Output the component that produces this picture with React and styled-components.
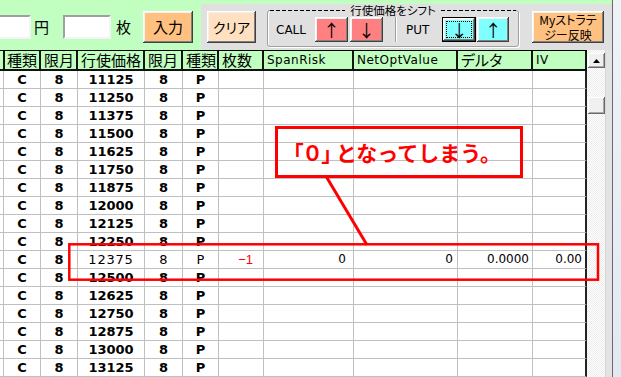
import React from "react";
import styled, { createGlobalStyle } from "styled-components";

const JP = `"Noto Sans CJK JP", sans-serif`;
const UI = `"DejaVu Sans", "Noto Sans CJK JP", sans-serif`;

const GlobalStyle = createGlobalStyle`
  html, body { margin: 0; padding: 0; overflow: hidden; }
  body { width: 621px; height: 377px; background: #fff; font-family: ${JP}; }
`;

const Window = styled.div`
  position: relative;
  display: flex;
  width: 621px;
  height: 377px;
  overflow: hidden;
`;

const Main = styled.div`
  width: 612px;
  display: flex;
  flex-direction: column;
`;

const FrameEdge = styled.div`
  width: 8px;
  border-left: 1px solid #6a6a6a;
  background: linear-gradient(#eef3f8, #e2e9f1);
`;

const TopBar = styled.div`
  height: 52px;
  box-sizing: border-box;
  padding-top: 4px;
  display: flex;
  background: #c0ffc0;
`;

const InputGroup = styled.div`
  width: 201px;
  display: flex;
  align-items: center;
  padding-bottom: 1px;
`;

const TextBox = styled.input`
  box-sizing: border-box;
  width: ${(p) => p.$w}px;
  height: 24px;
  margin: 0 0 0 ${(p) => p.$ml || 0}px;
  padding: 0;
  background: #fff;
  border: 2px solid;
  border-color: #a0a0a0 #f4f4f4 #f4f4f4 #a0a0a0;
  outline: none;
`;

const Unit = styled.span`
  font-family: ${JP};
  font-size: 15px;
  line-height: 20px;
  margin-left: ${(p) => p.$ml}px;
`;

const Btn = styled.button`
  box-sizing: border-box;
  width: ${(p) => p.$w}px;
  height: ${(p) => p.$h}px;
  margin: ${(p) => p.$mt || 0}px 0 0 ${(p) => p.$ml || 0}px;
  padding: 0;
  border: ${(p) => (p.$focus ? "1px solid #000" : "none")};
  background: ${(p) => p.$bg};
  box-shadow: inset -1px -1px #404040, inset 1px 1px #ffffff,
    inset -2px -2px #808080, inset 2px 2px #f2f2f2;
  outline: ${(p) => (p.$focus ? "1px dotted #000" : "none")};
  outline-offset: -5px;
  font-family: ${JP};
  font-size: ${(p) => p.$fs || 15}px;
  font-feature-settings: "palt" 1;
  line-height: ${(p) => p.$lh || 20}px;
  color: #000;
  display: flex;
  flex-direction: column;
  align-items: center;
  justify-content: center;
  text-align: center;
  flex-shrink: 0;
`;

const Panel = styled.div`
  flex: 1;
  background: #e0e0e0;
  display: flex;
  align-items: flex-start;
  padding-left: 6px;
`;

const ShiftGroup = styled.fieldset`
  box-sizing: border-box;
  width: 252px;
  height: 43px;
  margin: 0 0 0 11px;
  padding: 0;
  border: 1px solid #a0a0a0;
  border-radius: 3px;
  box-shadow: inset 1px 1px #fff, 1px 1px #fff;
  flex-shrink: 0;
`;

const Legend = styled.legend`
  width: 246px;
  height: 12px;
  margin-left: 2px;
  padding: 0;
  display: flex;
  align-items: center;
  gap: 5px;
  font-family: ${JP};
  font-size: 11.5px;
  font-feature-settings: "palt" 1;
  line-height: 12px;
  background: #e0e0e0;
`;

const Dashes = styled.span`
  flex: 1;
  height: 1px;
  margin-top: 1px;
  background: repeating-linear-gradient(90deg, #000 0 4px, transparent 4px 6px);
`;

const ShiftRow = styled.div`
  display: flex;
  align-items: center;
  height: 25px;
  margin-top: 1px;
  padding-left: 8px;
`;

const SideLabel = styled.span`
  font-family: ${UI};
  font-size: 12px;
  line-height: 14px;
  margin-left: ${(p) => p.$ml || 0}px;
  margin-right: ${(p) => p.$mr || 0}px;
`;

const Separator = styled.span`
  width: 1px;
  height: 25px;
  margin-left: 12px;
  background: #a0a0a0;
  border-right: 1px solid #fff;
`;

const Arrow = styled.span`
  font-family: ${JP};
  font-size: 17px;
  line-height: 20px;
`;

const BtnLine = styled.span`
  display: block;
  white-space: nowrap;
`;

const GridArea = styled.div`
  flex: 1;
  display: flex;
`;

const Table = styled.div`
  width: 587px;
  display: flex;
  flex-direction: column;
`;

const COLS = "4px 37px 37px 67px 38px 36px 45px 90px 104px 75px 54px";

const HeadRow = styled.div`
  display: grid;
  grid-template-columns: ${COLS};
  border-top: 1px solid #000;
  border-bottom: 2px solid #111;
  background: #c0ffc0;
`;

const HeadCell = styled.div`
  box-sizing: border-box;
  height: 18px;
  padding-left: 3px;
  border-right: 2px solid #151515;
  font-family: ${(p) => (p.$latin ? UI : JP)};
  font-size: ${(p) => (p.$latin ? 12 : 15)}px;
  letter-spacing: ${(p) => (p.$latin ? 0.5 : 0)}px;
  font-feature-settings: "palt" 1;
  line-height: 18px;
  white-space: nowrap;
`;

const DataRow = styled.div`
  display: grid;
  grid-template-columns: ${COLS};
`;

const Cell = styled.div`
  box-sizing: border-box;
  height: 18px;
  line-height: 17px;
  border-right: ${(p) => (p.$last ? "2px solid #222" : "1px solid #c0c0c0")};
  border-bottom: 1px solid #c0c0c0;
  text-align: ${(p) => p.$align || "center"};
  padding-right: ${(p) => p.$pr || 0}px;
  font-family: ${(p) => (p.$red ? `"Liberation Sans", sans-serif` : UI)};
  font-size: ${(p) => p.$fs || 12}px;
  font-weight: ${(p) => (p.$bold ? 700 : 400)};
  letter-spacing: ${(p) => p.$ls || 0}px;
  color: ${(p) => (p.$red ? "#ff0000" : "#000")};
  white-space: nowrap;
`;

const ScrollBar = styled.div`
  width: 18px;
  display: flex;
  flex-direction: column;
  align-items: flex-end;
  padding-top: 3px;
  box-sizing: border-box;
  background: repeating-conic-gradient(#ececec 0 25%, #ffffff 0 50%) 0 0 / 2px 2px;
`;

const ScrollKnob = styled.div`
  width: 17px;
  height: ${(p) => p.$h}px;
  margin-top: ${(p) => p.$mt || 0}px;
  box-sizing: border-box;
  background: #f0f0f0;
  box-shadow: inset -1px -1px #6a6a6a, inset 1px 1px #ffffff,
    inset -2px -2px #a8a8a8;
  display: flex;
  align-items: center;
  justify-content: center;
`;

const Strip = styled.div`
  width: 7px;
  background: #e3e3e3;
  border-left: 1px solid #d6d6d6;
  box-sizing: border-box;
`;

const Marks = styled.svg`
  position: absolute;
  left: 0;
  top: 0;
  pointer-events: none;
`;

const Callout = styled.div`
  position: absolute;
  left: 275px;
  top: 126px;
  width: 248px;
  height: 52px;
  box-sizing: border-box;
  border: 3px solid #ff0000;
  display: flex;
  align-items: center;
  justify-content: center;
  padding-right: 4px;
  font-family: ${JP};
  font-weight: 700;
  font-size: 21px;
  color: #ff0000;
  white-space: nowrap;
`;

const Bracketed = styled.span`
  font-feature-settings: "palt" 1;
  letter-spacing: 1px;
  margin-right: 3px;
`;

const HEADS = [
  ["", false],
  ["種類", false],
  ["限月", false],
  ["行使価格", false],
  ["限月", false],
  ["種類", false],
  ["枚数", false],
  ["SpanRisk", true],
  ["NetOptValue", true],
  ["デルタ", false],
  ["IV", true],
];

const strikes = Array.from({ length: 17 }, (_, i) => 11125 + i * 125);

function GridRow({ strike }) {
  const hit = strike === 12375;
  return (
    <DataRow>
      <Cell />
      <Cell $bold $fs={13}>C</Cell>
      <Cell $bold $fs={13}>8</Cell>
      {hit ? (
        <>
          <Cell $fs={13} $ls={0.8}>{strike}</Cell>
          <Cell $fs={13}>8</Cell>
          <Cell $fs={13}>P</Cell>
          <Cell $align="right" $pr={10} $red $fs={13}>−1</Cell>
          <Cell $align="right" $pr={7}>0</Cell>
          <Cell $align="right" $pr={4}>0</Cell>
          <Cell $align="right" $pr={3}>0.0000</Cell>
          <Cell $align="right" $pr={3} $last>0.00</Cell>
        </>
      ) : (
        <>
          <Cell $bold $fs={13}>{strike}</Cell>
          <Cell $bold $fs={13}>8</Cell>
          <Cell $bold $fs={13}>P</Cell>
          <Cell />
          <Cell />
          <Cell />
          <Cell />
          <Cell $last />
        </>
      )}
    </DataRow>
  );
}

export default function App() {
  return (
    <>
      <GlobalStyle />
      <Window>
        <Main>
          <TopBar>
            <InputGroup>
              <TextBox $w={40} $ml={-9} />
              <Unit $ml={3}>円</Unit>
              <TextBox $w={48} $ml={14} />
              <Unit $ml={5}>枚</Unit>
              <Btn $w={50} $h={32} $ml={12} $bg="#ffc080">入力</Btn>
            </InputGroup>
            <Panel>
              <Btn $w={49} $h={32} $mt={7} $bg="#ffe0c0" $fs={14}>クリア</Btn>
              <ShiftGroup>
                <Legend>
                  <Dashes />
                  <span>行使価格をシフト</span>
                  <Dashes />
                </Legend>
                <ShiftRow>
                  <SideLabel $mr={9}>CALL</SideLabel>
                  <Btn $w={33} $h={25} $bg="#ff8080"><Arrow>↑</Arrow></Btn>
                  <Btn $w={33} $h={25} $ml={2} $bg="#ff8080"><Arrow>↓</Arrow></Btn>
                  <Separator />
                  <SideLabel $ml={9} $mr={13}>PUT</SideLabel>
                  <Btn $w={34} $h={25} $bg="#80ffff" $focus><Arrow>↓</Arrow></Btn>
                  <Btn $w={32} $h={25} $ml={1} $bg="#80ffff"><Arrow>↑</Arrow></Btn>
                </ShiftRow>
              </ShiftGroup>
              <Btn $w={72} $h={32} $mt={7} $ml={13} $bg="#ffc080" $fs={12} $lh={15}>
                <BtnLine>Myストラテ</BtnLine>
                <BtnLine>ジー反映</BtnLine>
              </Btn>
            </Panel>
          </TopBar>
          <GridArea>
            <Table>
              <HeadRow>
                {HEADS.map(([t, latin], i) => (
                  <HeadCell key={i} $latin={latin}>{t}</HeadCell>
                ))}
              </HeadRow>
              {strikes.map((s) => (
                <GridRow key={s} strike={s} />
              ))}
            </Table>
            <ScrollBar>
              <ScrollKnob $h={15}>
                <svg width="7" height="4" viewBox="0 0 7 4">
                  <path d="M3.5 0 L7 4 L0 4 Z" fill="#000" />
                </svg>
              </ScrollKnob>
              <ScrollKnob $h={17} $mt={29} />
            </ScrollBar>
            <Strip />
          </GridArea>
        </Main>
        <FrameEdge />
        <Marks width="621" height="377" viewBox="0 0 621 377">
          <rect x="69.3" y="244.3" width="528.7" height="35.4" fill="none" stroke="#ff0000" strokeWidth="2.5" />
          <line x1="326.5" y1="177" x2="367" y2="245" stroke="#ff0000" strokeWidth="3" />
        </Marks>
        <Callout>
          <Bracketed>「０」</Bracketed>となってしまう。
        </Callout>
      </Window>
    </>
  );
}
